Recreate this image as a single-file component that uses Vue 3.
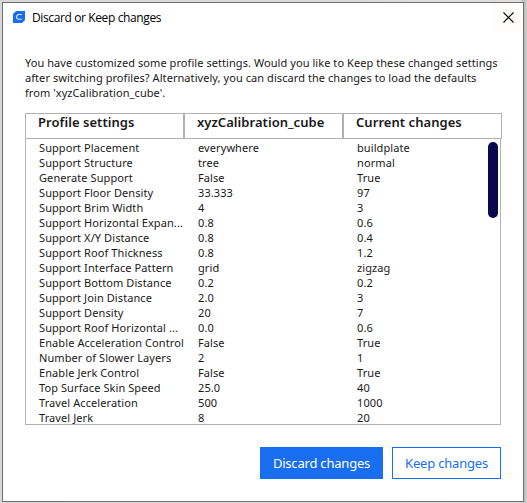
<script setup>
const message = [
  'You have customized some profile settings. Would you like to Keep these changed settings',
  'after switching profiles? Alternatively, you can discard the changes to load the defaults',
  "from 'xyzCalibration_cube'.",
]
const headers = ['Profile settings', 'xyzCalibration_cube', 'Current changes']
const rows = [
  ['Support Placement', 'everywhere', 'buildplate'],
  ['Support Structure', 'tree', 'normal'],
  ['Generate Support', 'False', 'True'],
  ['Support Floor Density', '33.333', '97'],
  ['Support Brim Width', '4', '3'],
  ['Support Horizontal Expan...', '0.8', '0.6'],
  ['Support X/Y Distance', '0.8', '0.4'],
  ['Support Roof Thickness', '0.8', '1.2'],
  ['Support Interface Pattern', 'grid', 'zigzag'],
  ['Support Bottom Distance', '0.2', '0.2'],
  ['Support Join Distance', '2.0', '3'],
  ['Support Density', '20', '7'],
  ['Support Roof Horizontal ...', '0.0', '0.6'],
  ['Enable Acceleration Control', 'False', 'True'],
  ['Number of Slower Layers', '2', '1'],
  ['Enable Jerk Control', 'False', 'True'],
  ['Top Surface Skin Speed', '25.0', '40'],
  ['Travel Acceleration', '500', '1000'],
  ['Travel Jerk', '8', '20'],
]
</script>

<template>
  <div class="backdrop">
    <section class="dialog" role="dialog">
      <header class="titlebar">
        <svg class="logo" width="12" height="12" viewBox="0 0 12 12">
          <path d="M3 0H12V9L9 12H0V3Z" fill="#196ef0" />
          <path d="M8.8 3.5H5.2L3.6 5V7L5.2 8.3H8.8" fill="none" stroke="#d5e5ff" stroke-width="1.1" />
        </svg>
        <span class="title">Discard or Keep changes</span>
        <button class="close" aria-label="Close">
          <svg width="11" height="11" viewBox="0 0 11 11">
            <path d="M.5 .5L10.5 10.5M10.5 .5L.5 10.5" stroke="#000" stroke-width="1.1" />
          </svg>
        </button>
      </header>
      <p class="message">
        <span v-for="line in message" :key="line">{{ line }}</span>
      </p>
      <div class="table">
        <div class="head">
          <div v-for="h in headers" :key="h" class="th">{{ h }}</div>
        </div>
        <div class="body">
          <div class="rows">
            <div v-for="row in rows" :key="row[0]" class="row">
              <span v-for="(cell, i) in row" :key="i">{{ cell }}</span>
            </div>
          </div>
          <div class="scrollbar"></div>
        </div>
      </div>
      <footer class="actions">
        <button class="btn primary">Discard changes</button>
        <button class="btn secondary">Keep changes</button>
      </footer>
    </section>
  </div>
</template>

<style>
body {
  margin: 0;
  overflow: hidden;
}
</style>

<style scoped>
.backdrop {
  box-sizing: border-box;
  width: 527px;
  height: 503px;
  padding: 2px 3px 1px 2px;
  background: linear-gradient(90deg, #d8d8d8 0, #dedede 520px, #bcbcbc 524px, #cfcfcf 527px);
  font-family: "Noto Sans", "Open Sans", sans-serif;
  color: #191919;
}
.dialog {
  box-sizing: border-box;
  display: flex;
  flex-direction: column;
  height: 500px;
  border: 1px solid #6e6e6e;
  background: #fff;
}
button {
  font: inherit;
  border: 0;
  border-radius: 0;
  padding: 0;
  background: none;
}
.titlebar {
  display: flex;
  align-items: center;
  height: 29px;
  padding-left: 10px;
}
.logo {
  margin-bottom: 1px;
}
.title {
  margin-left: 7px;
  font-family: "Open Sans", "Noto Sans", sans-serif;
  font-size: 12px;
  letter-spacing: -0.38px;
  line-height: 16px;
  color: #000;
}
.close {
  display: flex;
  justify-content: center;
  align-items: center;
  width: 29px;
  height: 28px;
  margin: 0 2px 0 auto;
  padding-left: 4px;
  background: #fffdfc;
}
.message {
  display: flex;
  flex-direction: column;
  margin: 23px 0 0 22px;
  font-size: 11px;
  letter-spacing: 0.065px;
  line-height: 15px;
  white-space: nowrap;
}
.table {
  width: 477px;
  margin: 13px 0 0 22px;
}
.head {
  box-sizing: border-box;
  display: grid;
  grid-template-columns: 159px 159px 1fr;
  height: 26px;
  border: 1px solid #b2b2b2;
}
.th {
  padding-left: 12px;
  font-size: 13px;
  font-weight: 600;
  letter-spacing: 0.05px;
  line-height: 16px;
  white-space: nowrap;
}
.th:not(:last-child) {
  border-right: 2px solid #b2b2b2;
}
.body {
  box-sizing: border-box;
  display: flex;
  justify-content: space-between;
  width: 476px;
  height: 286px;
  padding: 1px 2px 0 13px;
  border: 1px solid #b2b2b2;
  border-top: 0;
  overflow: hidden;
}
.row {
  display: grid;
  grid-template-columns: 159px 159px 100px;
  height: 15px;
  font-size: 11px;
  letter-spacing: 0.09px;
  line-height: 15px;
  white-space: nowrap;
}
.scrollbar {
  width: 10px;
  height: 76px;
  margin-top: 2px;
  border-radius: 5px;
  background: #08074d;
}
.actions {
  display: flex;
  justify-content: flex-end;
  gap: 9px;
  margin-top: 22px;
  padding-right: 22px;
}
.btn {
  box-sizing: border-box;
  height: 32px;
  border: 1px solid #196ef0;
  font-size: 13px;
  letter-spacing: -0.2px;
  line-height: 30px;
  white-space: nowrap;
}
.primary {
  width: 123px;
  background: #196ef0;
  color: #fff;
}
.secondary {
  width: 109px;
  color: #196ef0;
}
</style>
